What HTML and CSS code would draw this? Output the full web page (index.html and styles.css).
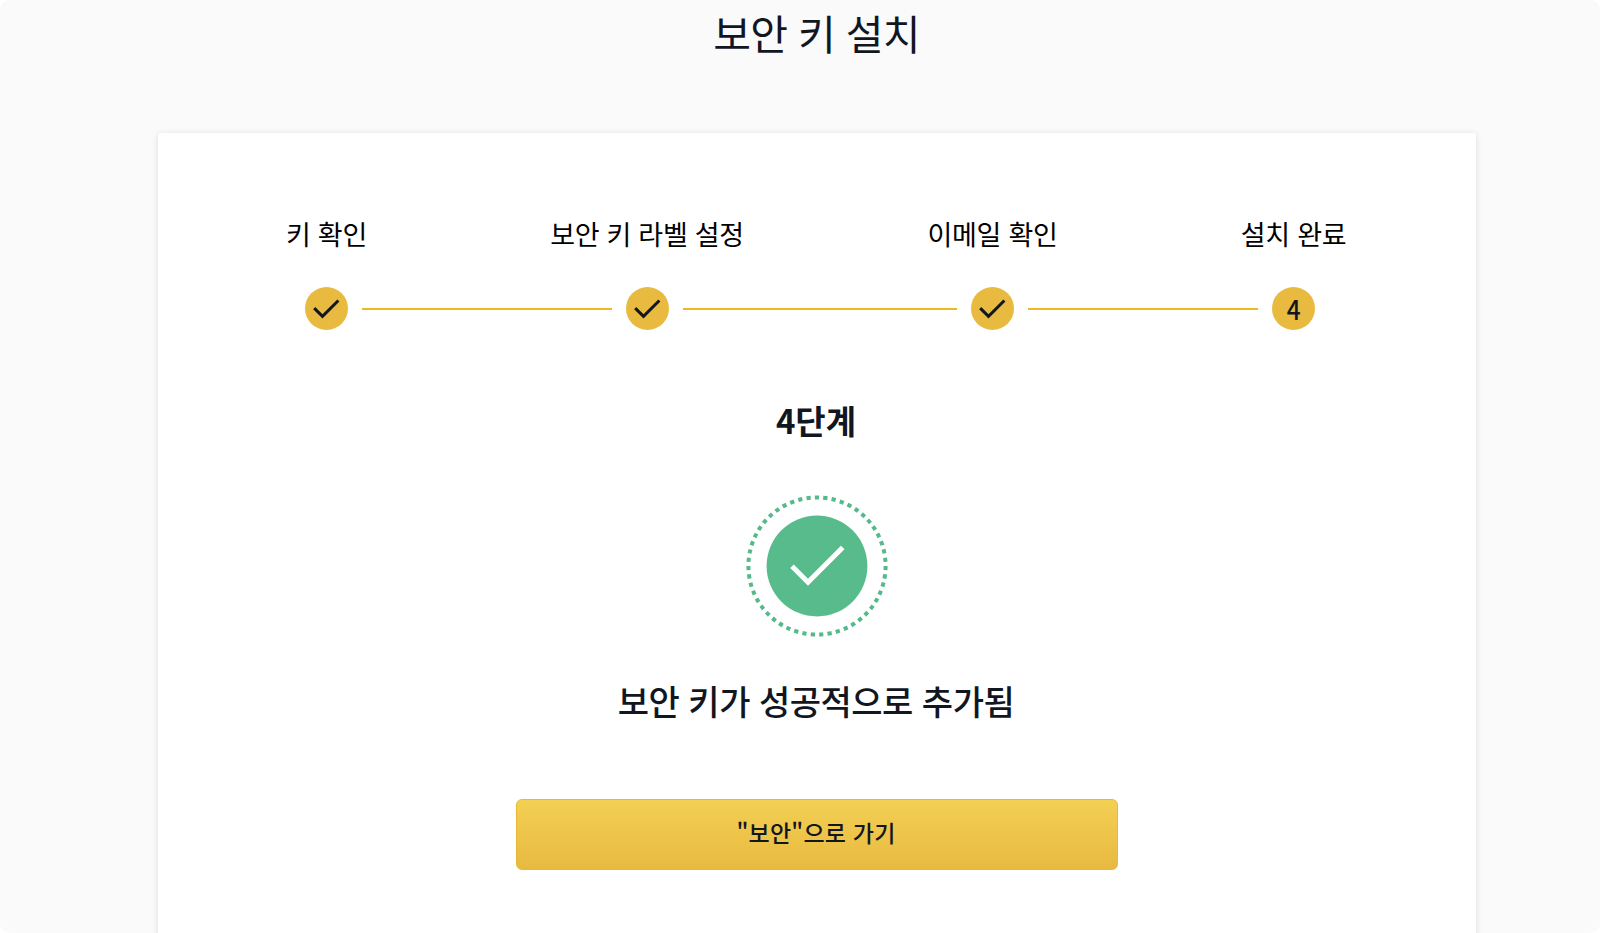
FILE: index.html
```html
<!DOCTYPE html>
<html lang="ko">
<head>
  <meta charset="UTF-8" />
  <meta name="viewport" content="width=device-width, initial-scale=1.0" />
  <title>보안 키 설치</title>
  <link rel="stylesheet" href="styles.css">
</head>
<body>
  <main class="page">
    <h1 class="page-title">보안 키 설치</h1>

    <section class="card">
      <div class="steps">
        <div class="step">
          <span class="step-label">키 확인</span>
          <span class="step-dot">
            <svg viewBox="0 0 43 43"><path d="M9.2 21.1L17.5 29.4L33.4 13.5"/></svg>
          </span>
        </div>
        <div class="step-line"></div>
        <div class="step">
          <span class="step-label">보안 키 라벨 설정</span>
          <span class="step-dot">
            <svg viewBox="0 0 43 43"><path d="M9.2 21.1L17.5 29.4L33.4 13.5"/></svg>
          </span>
        </div>
        <div class="step-line"></div>
        <div class="step">
          <span class="step-label">이메일 확인</span>
          <span class="step-dot">
            <svg viewBox="0 0 43 43"><path d="M9.2 21.1L17.5 29.4L33.4 13.5"/></svg>
          </span>
        </div>
        <div class="step-line"></div>
        <div class="step">
          <span class="step-label">설치 완료</span>
          <span class="step-dot"><span class="num">4</span></span>
        </div>
      </div>

      <h2 class="step-title">4단계</h2>

      <svg class="success-icon" viewBox="0 0 142 142">
        <circle class="ring" cx="71" cy="71" r="68.6" pathLength="102" transform="rotate(-91.8 71 71)"/>
        <circle class="disc" cx="71" cy="71" r="50.4"/>
        <path class="tick" d="M46 71.2L62 87.2L96.7 52.5"/>
      </svg>

      <p class="message">보안 키가 성공적으로 추가됨</p>

      <button class="btn" type="button">"보안"으로 가기</button>
    </section>
  </main>
</body>
</html>
```

FILE: styles.css
```css
* { box-sizing: border-box; margin: 0; padding: 0; }
html { background: #fff; }
body {
  height: 100vh; overflow: hidden;
  font-family: 'Noto Sans CJK KR', sans-serif;
  color: #12161f;
}
.page {
  height: 100vh; overflow: hidden;
  padding-left: 34px;
  display: flex; flex-direction: column; align-items: center;
  background: #fafafa; border-radius: 10px;
}
.page-title {
  height: 133px; padding: 1px 1px 0 0; flex: none;
  font-size: 41px; font-weight: 400; line-height: 62px;
  letter-spacing: -0.7px;
}
.card {
  width: 1318px; height: 840px; flex: none;
  padding-top: 81px;
  display: flex; flex-direction: column; align-items: center;
  background: #fff; border-radius: 3px;
  box-shadow: 0 1px 6px rgba(0,0,0,0.12);
}

/* steps */
.steps {
  width: 1010px; height: 116px; margin-right: 14px;
  display: grid; align-items: end;
  grid-template-columns: 43px 277.5fr 43px 302.5fr 43px 258fr 43px;
}
.step {
  height: 116px;
  display: flex; flex-direction: column; align-items: center;
  justify-content: space-between;
}
.step-label {
  font-size: 27px; line-height: 40px; white-space: nowrap; color: #000;
  letter-spacing: -0.3px;
}
.step-dot {
  width: 43px; height: 43px; border-radius: 50%;
  display: flex; align-items: center; justify-content: center;
  background: #e8ba40; font-size: 27px; font-weight: 500;
}
.step-dot svg {
  width: 43px; height: 43px;
  fill: none; stroke: #12161f; stroke-width: 3;
}
.num { transform: scaleX(0.9); }
.step-line {
  height: 2px; margin: 0 14px 20px; background: #edb921;
}

.step-title {
  margin: 65px 2px 0 0;
  font-size: 33px; font-weight: 700; line-height: 50px;
}
.success-icon {
  width: 142px; height: 142px; margin-top: 50px;
}
.ring {
  fill: none; stroke: #55ba8a; stroke-width: 4; stroke-dasharray: 1 1;
}
.disc { fill: #57bb8b; }
.tick { fill: none; stroke: #fff; stroke-width: 5; }
.message {
  margin: 39px 2px 0 0;
  font-size: 34px; font-weight: 500; line-height: 50px;
  letter-spacing: -0.5px;
}
.btn {
  width: 602px; height: 71px; margin-top: 73px; padding: 0 2px 5px 0;
  border: 1px solid #e9b935; border-radius: 6px;
  background: linear-gradient(#f3d053, #e8b940);
  font-family: inherit; font-size: 23px; font-weight: 500; color: #12161f;
  letter-spacing: 0.2px;
  cursor: pointer;
}
```
